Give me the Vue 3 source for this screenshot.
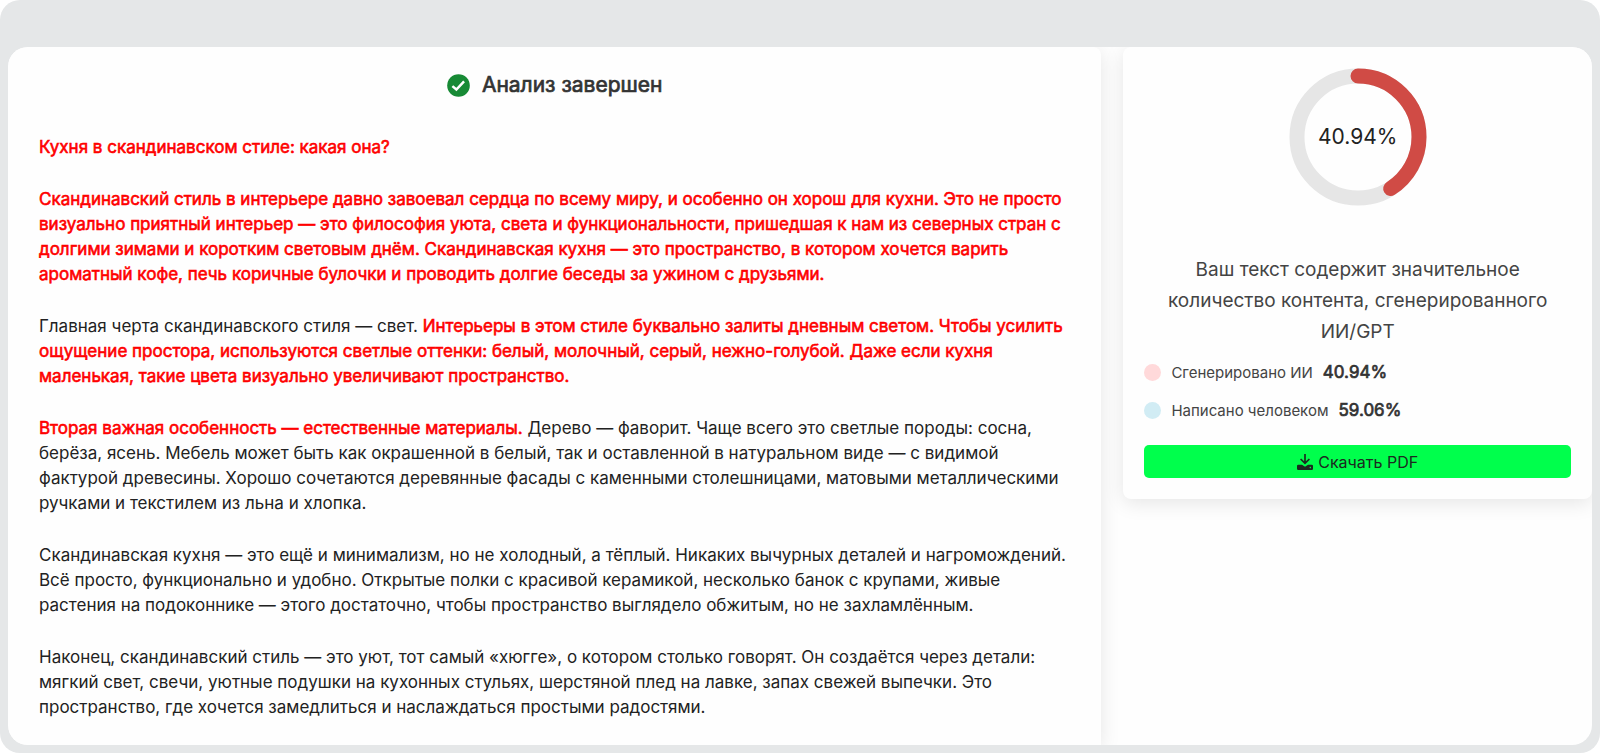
<template>
  <div class="report-page">
    <div class="report-panel">
      <main class="result-card">
        <header class="result-header">
          <svg class="status-icon" viewBox="0 0 24 24" aria-hidden="true">
            <circle cx="12" cy="12" r="11.8" fill="#178a35" />
            <path d="M5.6 12.6 L9.8 16.2 L17.8 7.8" fill="none" stroke="#fff" stroke-width="2.6" />
          </svg>
          <h2 class="result-title">Анализ завершен</h2>
        </header>

        <article class="result-text">
          <p v-for="(paragraph, i) in paragraphs" :key="i">
            <span
              v-for="(part, j) in paragraph"
              :key="j"
              :class="{ generated: part.ai }"
            >{{ part.text }}</span>
          </p>
        </article>
      </main>

      <aside class="summary-card">
        <div class="gauge">
          <svg class="gauge-ring" viewBox="0 0 138 138" aria-hidden="true">
            <circle class="ring-track" cx="69" cy="69" :r="radius" />
            <circle
              class="ring-value"
              cx="69"
              cy="69"
              :r="radius"
              :stroke-dasharray="dashArray"
              transform="rotate(-90 69 69)"
            />
          </svg>
          <span class="gauge-label">{{ aiPercent.toFixed(2) }}%</span>
        </div>

        <p class="verdict">Ваш текст содержит значительное количество контента, сгенерированного ИИ/GPT</p>

        <ul class="legend">
          <li v-for="item in legend" :key="item.label">
            <span class="dot" :class="item.kind"></span>
            <span class="legend-label">{{ item.label }}</span>
            <strong class="legend-value">{{ item.value.toFixed(2) }}%</strong>
          </li>
        </ul>

        <button type="button" class="download-btn">
          <svg class="download-icon" viewBox="0 0 16 16" aria-hidden="true">
            <path d="M8 0 V9 M3.6 5 L8 9.3 L12.4 5" fill="none" stroke="currentColor" stroke-width="1.7" />
            <path
              fill="currentColor"
              fill-rule="evenodd"
              d="M1.2 10.8 H5 L8 12.8 L11 10.8 H14.8 Q16 10.8 16 12 V14.8 Q16 16 14.8 16 H1.2 Q0 16 0 14.8 V12 Q0 10.8 1.2 10.8 Z M13.3 12.8 a .7 .7 0 1 0 .01 0 Z"
            />
          </svg>
          Скачать PDF
        </button>
      </aside>
    </div>
  </div>
</template>

<script setup>
import { ref, computed } from 'vue';

const aiPercent = ref(40.94);
const radius = 61;

const paragraphs = [
  [{ ai: true, text: 'Кухня в скандинавском стиле: какая она?' }],
  [
    {
      ai: true,
      text: 'Скандинавский стиль в интерьере давно завоевал сердца по всему миру, и особенно он хорош для кухни. Это не просто визуально приятный интерьер — это философия уюта, света и функциональности, пришедшая к нам из северных стран с долгими зимами и коротким световым днём. Скандинавская кухня — это пространство, в котором хочется варить ароматный кофе, печь коричные булочки и проводить долгие беседы за ужином с друзьями.',
    },
  ],
  [
    { ai: false, text: 'Главная черта скандинавского стиля — свет. ' },
    {
      ai: true,
      text: 'Интерьеры в этом стиле буквально залиты дневным светом. Чтобы усилить ощущение простора, используются светлые оттенки: белый, молочный, серый, нежно-голубой. Даже если кухня маленькая, такие цвета визуально увеличивают пространство.',
    },
  ],
  [
    { ai: true, text: 'Вторая важная особенность — естественные материалы.' },
    {
      ai: false,
      text: ' Дерево — фаворит. Чаще всего это светлые породы: сосна, берёза, ясень. Мебель может быть как окрашенной в белый, так и оставленной в натуральном виде — с видимой фактурой древесины. Хорошо сочетаются деревянные фасады с каменными столешницами, матовыми металлическими ручками и текстилем из льна и хлопка.',
    },
  ],
  [
    {
      ai: false,
      text: 'Скандинавская кухня — это ещё и минимализм, но не холодный, а тёплый. Никаких вычурных деталей и нагромождений. Всё просто, функционально и удобно. Открытые полки с красивой керамикой, несколько банок с крупами, живые растения на подоконнике — этого достаточно, чтобы пространство выглядело обжитым, но не захламлённым.',
    },
  ],
  [
    {
      ai: false,
      text: 'Наконец, скандинавский стиль — это уют, тот самый «хюгге», о котором столько говорят. Он создаётся через детали: мягкий свет, свечи, уютные подушки на кухонных стульях, шерстяной плед на лавке, запах свежей выпечки. Это пространство, где хочется замедлиться и наслаждаться простыми радостями.',
    },
  ],
];

const legend = computed(() => [
  { kind: 'ai', label: 'Сгенерировано ИИ', value: aiPercent.value },
  { kind: 'human', label: 'Написано человеком', value: 100 - aiPercent.value },
]);

// длина дуги для процента ИИ
const dashArray = computed(() => {
  const length = 2 * Math.PI * radius;
  return `${(length * aiPercent.value) / 100} ${length}`;
});
</script>

<style>
body {
  background: #fff;
}
</style>

<style scoped>
.report-page {
  display: flex;
  box-sizing: border-box;
  min-height: 100vh;
  padding: 47px 8px 8px;
  background: #e5e7e8;
  border-radius: 20px;
  font-family: Inter, "Liberation Sans", sans-serif;
  color: #222;
}

.report-panel {
  display: grid;
  grid-template-columns: 7fr 3fr;
  column-gap: 22px;
  flex: 1;
  align-items: start;
  background: #fefefe;
  border-radius: 20px;
  overflow: hidden;
}

/* ── Текст с разметкой ── */
.result-card {
  align-self: stretch;
  padding: 24px 31px 20px;
  background: #fefefe;
  border-radius: 8px 8px 0 0;
  box-shadow: 0 4px 20px rgba(0, 0, 0, 0.1);
}

.result-header {
  display: flex;
  align-items: center;
  justify-content: center;
  gap: 12px;
  margin-bottom: 36px;
}

.status-icon {
  width: 23px;
  height: 23px;
}

.result-title {
  margin: 0;
  font-size: 21px;
  line-height: 28px;
  font-weight: 400;
  color: #333;
  -webkit-text-stroke: 0.7px currentColor;
}

.result-text {
  font-size: 17px;
  line-height: 25px;
}

.result-text p {
  margin: 0 0 27px;
}

.result-text p:last-child {
  margin-bottom: 0;
}

.generated {
  color: #f00;
  -webkit-text-stroke: 0.6px currentColor;
}

/* ── Итог ── */
.summary-card {
  padding: 21px;
  background: #fefefe;
  border-radius: 8px;
  box-shadow: 0 4px 20px rgba(0, 0, 0, 0.1);
}

.gauge {
  display: grid;
  place-items: center;
  margin-bottom: 48px;
}

.gauge-ring,
.gauge-label {
  grid-area: 1 / 1;
}

.gauge-ring {
  width: 138px;
  height: 138px;
}

.ring-track,
.ring-value {
  fill: none;
  stroke-width: 15;
}

.ring-track {
  stroke: #e6e6e6;
}

.ring-value {
  stroke: #d04b45;
  stroke-linecap: round;
}

.gauge-label {
  font-size: 21px;
  line-height: 28px;
}

.verdict {
  margin: 0 0 12px;
  font-size: 19px;
  line-height: 31px;
  text-align: center;
  color: #444;
}

.legend {
  margin: 0;
  padding: 0;
  list-style: none;
}

.legend li {
  display: flex;
  align-items: center;
  height: 26px;
  margin-bottom: 12px;
  font-size: 15px;
  color: #444;
}

.dot {
  width: 17px;
  height: 17px;
  margin-right: 10px;
  border-radius: 50%;
}

.dot.ai {
  background: #ffd9da;
}

.dot.human {
  background: #d1ecf4;
}

.legend-value {
  margin-left: 10px;
  font-size: 17px;
  font-weight: 400;
  color: #333;
  -webkit-text-stroke: 0.7px currentColor;
}

.download-btn {
  display: flex;
  align-items: center;
  justify-content: center;
  gap: 5px;
  width: 100%;
  height: 33px;
  margin-top: 22px;
  padding: 0;
  border: none;
  border-radius: 5px;
  background: #00ff4c;
  font-family: inherit;
  font-size: 16px;
  color: #1c2a20;
  cursor: pointer;
}

.download-icon {
  width: 16px;
  height: 16px;
}
</style>
